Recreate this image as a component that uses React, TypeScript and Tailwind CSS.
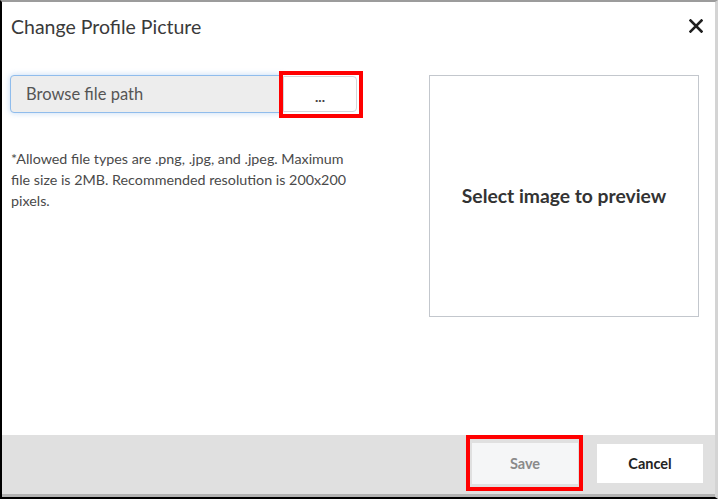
import React from 'react';

const font = { fontFamily: 'Lato, "Liberation Sans", sans-serif' };

function CloseIcon() {
  return (
    <svg width="14" height="14" viewBox="0 0 14 14" fill="none">
      <path d="M1.5 1.5 L12.5 12.5 M12.5 1.5 L1.5 12.5" stroke="#1f1f1f" strokeWidth="2.6" strokeLinecap="square" />
    </svg>
  );
}

export default function App() {
  return (
    <div
      className="w-[718px] h-[499px] bg-white flex flex-col border-l-2 border-l-black border-t-2 border-t-[#9c9c9c] border-r-[3px] border-r-[#d4d4d4] border-b-2 border-b-black"
      style={font}
    >
      {/* header */}
      <div className="flex items-start justify-between h-[73px] pl-[9px] pr-[12px] pt-[13px]">
        <h1 className="text-[19.5px] leading-[24px] text-[#3a3a3a]">Change Profile Picture</h1>
        <button className="mt-[4px]">
          <CloseIcon />
        </button>
      </div>

      {/* body */}
      <div className="flex flex-1 pl-[8px] pr-[16px]">
        <div className="w-[347px] flex flex-col">
          <div className="flex h-[38px]">
            <div className="flex-1 flex items-center pl-[15px] bg-[#ededed] border border-[#8fbcec] rounded-l-[4px] shadow-[0_0_6px_rgba(120,170,230,0.45)] text-[16.5px] text-[#555]">
              Browse file path
            </div>
            <div className="relative w-[74px]">
              <button className="w-full h-[36px] mt-[1px] bg-white border border-[#d3d6da] rounded-r-[4px] flex items-center justify-center text-[14px] text-[#444] font-bold pt-[4px]">
                ...
              </button>
              <div className="absolute -left-[4px] -top-[4px] -right-[6px] -bottom-[5px] border-[4px] border-[#ff0000]" />
            </div>
          </div>
          <p className="mt-[35px] pl-[1px] text-[14.3px] leading-[21px] text-[#4a4a4a] w-[350px]">
            *Allowed file types are .png, .jpg, and .jpeg. Maximum file size is 2MB. Recommended resolution is 200x200 pixels.
          </p>
        </div>
        <div className="ml-auto w-[270px] h-[242px] border border-[#c3c7cd] flex items-center justify-center">
          <span className="text-[19.3px] font-bold text-[#333]">Select image to preview</span>
        </div>
      </div>

      {/* footer */}
      <div className="h-[62px] bg-[#e0e0e0] border-b-[3px] border-b-[#b3b3b3] flex items-center justify-end gap-[19px] pr-[12px] pb-[2px]">
        <div className="relative">
          <button className="w-[106px] h-[41px] bg-[#f5f6f7] text-[14.5px] font-bold text-[#8a8a8a]">Save</button>
          <div className="absolute -left-[6px] -top-[8px] -right-[5px] -bottom-[7px] border-[4px] border-[#ff0000]" />
        </div>
        <button className="w-[106px] h-[39px] bg-white text-[14.5px] font-bold text-[#222]">Cancel</button>
      </div>
    </div>
  );
}
